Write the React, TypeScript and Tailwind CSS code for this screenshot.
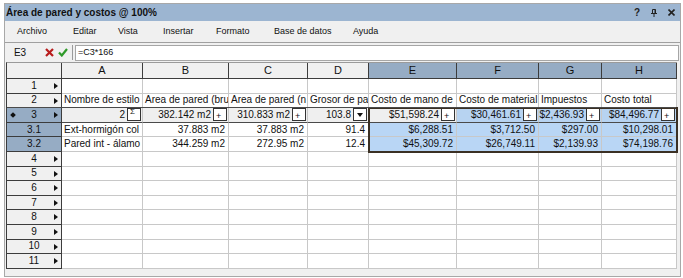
import React from "react";

type Col = { key: string; w: string; sel?: boolean };

const cols: Col[] = [
  { key: "A", w: "w-[81px]" },
  { key: "B", w: "w-[86px]" },
  { key: "C", w: "w-[79px]" },
  { key: "D", w: "w-[61px]" },
  { key: "E", w: "w-[88px]", sel: true },
  { key: "F", w: "w-[82px]", sel: true },
  { key: "G", w: "w-[63px]", sel: true },
  { key: "H", w: "w-[75px]", sel: true },
];

// as shown in the grid (cells clip their text)
const headerTexts = [
  "Nombre de estilo",
  "Area de pared (bru",
  "Area de pared (n",
  "Grosor de pa",
  "Costo de mano de",
  "Costo de material",
  "Impuestos",
  "Costo total",
];

const summary = ["2", "382.142 m2", "310.833 m2", "103.8", "$51,598.24", "$30,461.61", "$2,436.93", "$84,496.77"];
const summaryGlyph = ["sum", "plus", "plus", "down", "plus", "plus", "plus", "plus"];

const subRows = [
  {
    id: "3.1",
    cells: ["Ext-hormigón col", "37.883 m2", "37.883 m2", "91.4", "$6,288.51", "$3,712.50", "$297.00", "$10,298.01"],
  },
  {
    id: "3.2",
    cells: ["Pared int - álamo", "344.259 m2", "272.95 m2", "12.4", "$45,309.72", "$26,749.11", "$2,139.93", "$74,198.76"],
  },
];

const emptyRows = ["4", "5", "6", "7", "8", "9", "10", "11"];

const menu = [
  { label: "Archivo", w: "w-[56px]" },
  { label: "Editar", w: "w-[45px]" },
  { label: "Vista", w: "w-[45px]" },
  { label: "Insertar", w: "w-[53px]" },
  { label: "Formato", w: "w-[58px]" },
  { label: "Base de datos", w: "w-[79px]" },
  { label: "Ayuda", w: "w-[60px]" },
];

function Arrow() {
  return (
    <svg width="4" height="6" viewBox="0 0 4 6" className="absolute right-[3px] top-[4px]">
      <path d="M0 0 L4 3 L0 6 Z" fill="#111" />
    </svg>
  );
}

function RowHeader({ label, sel, arrow, dot }: { label: string; sel?: boolean; arrow?: boolean; dot?: boolean }) {
  return (
    <div
      className={`relative w-[55px] shrink-0 h-full border-r border-b border-[#3c3c3c] flex items-center justify-center ${
        sel ? "bg-[#96acc4]" : "bg-[#f0f0f0]"
      }`}
    >
      {dot && <div className="absolute left-[4px] top-[5px] w-[4px] h-[4px] bg-[#111] rotate-45" />}
      <span className="leading-none">{label}</span>
      {arrow && <Arrow />}
    </div>
  );
}

function CellBox({ kind }: { kind: string }) {
  return (
    <div className="w-[14px] h-[13px] shrink-0 mr-[1px] border border-[#333] bg-white relative">
      {kind === "sum" && <span className="absolute left-[2px] top-[-1px] text-[8px] leading-none">Σ</span>}
      {kind === "plus" && <span className="absolute left-[2px] bottom-[-1px] text-[9px] leading-none">+</span>}
      {kind === "down" && (
        <svg width="6" height="4" viewBox="0 0 6 4" className="absolute left-[3px] top-[4px]">
          <path d="M0 0 L6 0 L3 4 Z" fill="#111" />
        </svg>
      )}
    </div>
  );
}

export default function App() {
  return (
    <div
      className="w-[683px] h-[278px] bg-white overflow-hidden pt-[3px] pl-[4px] text-[#111]"
      style={{ fontFamily: '"Liberation Sans", Arial, sans-serif' }}
    >
      <div className="w-[677px] h-[274px] border border-[#a8a8a8] bg-[#f0f0f0] flex flex-col">
        {/* title bar */}
        <div className="h-[17px] bg-[#9cb5d1] flex items-center shrink-0">
          <span className="pl-[1px] font-bold text-[10px] leading-none text-[#111]">Área de pared y costos @ 100%</span>
          <div className="ml-auto flex items-center gap-[11px] pr-[5px] text-[#222]">
            <span className="font-bold text-[10px] leading-none">?</span>
            <svg width="6" height="8" viewBox="0 0 6 8">
              <path d="M1.5 0.5 H4.5 V4.5 H1.5 Z" fill="none" stroke="#222" strokeWidth="1" />
              <path d="M0 4.5 H6 M3 4.5 V8" stroke="#222" strokeWidth="1" />
              <path d="M4 0.5 V4.5" stroke="#222" strokeWidth="1" />
            </svg>
            <svg width="7" height="7" viewBox="0 0 7 7">
              <path d="M0.5 0.5 L6.5 6.5 M6.5 0.5 L0.5 6.5" stroke="#222" strokeWidth="1.6" />
            </svg>
          </div>
        </div>

        {/* menu */}
        <div className="h-[22px] shrink-0 flex items-center border-b border-[#a0a0a0] text-[9px]">
          {menu.map((m) => (
            <div key={m.label} className={`${m.w} pl-[12px] leading-none`}>
              {m.label}
            </div>
          ))}
        </div>

        {/* formula bar */}
        <div className="h-[19px] shrink-0 flex items-center">
          <div className="w-[30px] text-center text-[10px] leading-none">E3</div>
          <svg width="9" height="9" viewBox="0 0 9 9" className="ml-[10px]">
            <path d="M1 1 L8 8 M8 1 L1 8" stroke="#b81c1c" strokeWidth="2.2" />
          </svg>
          <svg width="10" height="9" viewBox="0 0 10 9" className="ml-[4px]">
            <path d="M1 4.5 L3.8 7.5 L9 1" fill="none" stroke="#2f9a2a" strokeWidth="2.2" />
          </svg>
          <div className="ml-[4px] w-px h-[15px] bg-[#9a9a9a]" />
          <div className="ml-[2px] w-[604px] h-[16px] border border-[#a6a6a6] bg-white flex items-center pl-[2px] text-[9px]">
            =C3*166
          </div>
        </div>

        {/* grid */}
        <div className="relative ml-px w-[671px] border-t border-[#9a9a9a] border-l border-l-[#3c3c3c] bg-white text-[10px]">
          {/* column headers */}
          <div className="flex h-[16px]">
            <div className="w-[55px] shrink-0 border-r border-b border-[#3c3c3c] bg-[#f0f0f0]" />
            {cols.map((c) => (
              <div
                key={c.key}
                className={`${c.w} shrink-0 border-r border-b border-[#3c3c3c] flex items-center justify-center text-[11px] leading-none ${
                  c.sel ? "bg-[#96acc4]" : "bg-[#f0f0f0]"
                }`}
              >
                {c.key}
              </div>
            ))}
          </div>

          {/* row 1 */}
          <div className="flex h-[14.6px]">
            <RowHeader label="1" arrow />
            {cols.map((c) => (
              <div key={c.key} className={`${c.w} shrink-0 border-r border-b border-[#c8c8c8]`} />
            ))}
          </div>

          {/* row 2 */}
          <div className="flex h-[14.6px]">
            <RowHeader label="2" arrow />
            {cols.map((c, i) => (
              <div
                key={c.key}
                className={`${c.w} shrink-0 border-r border-b border-[#c8c8c8] overflow-hidden whitespace-nowrap pl-[2px] flex items-center leading-none`}
              >
                {headerTexts[i]}
              </div>
            ))}
          </div>

          {/* row 3 summary */}
          <div className="flex h-[14.6px]">
            <RowHeader label="3" sel arrow dot />
            {cols.map((c, i) => (
              <div
                key={c.key}
                className={`${c.w} shrink-0 border-r border-[#c8c8c8] border-b border-b-[#4a4a4a] flex items-center justify-end leading-none ${
                  c.sel && i > 4 ? "bg-[#b7d3f1]" : "bg-[#efefef]"
                }`}
              >
                <span className="pr-[2px] whitespace-nowrap">{summary[i]}</span>
                <CellBox kind={summaryGlyph[i]} />
              </div>
            ))}
          </div>

          {/* rows 3.1 / 3.2 */}
          {subRows.map((r) => (
            <div key={r.id} className="flex h-[14.6px]">
              <RowHeader label={r.id} sel />
              {cols.map((c, i) => (
                <div
                  key={c.key}
                  className={`${c.w} shrink-0 border-r border-b border-[#c8c8c8] overflow-hidden whitespace-nowrap flex items-center leading-none ${
                    i === 0 ? "pl-[2px]" : "justify-end pr-[3px]"
                  } ${c.sel ? "bg-[#b9d6f5]" : ""}`}
                >
                  {r.cells[i]}
                </div>
              ))}
            </div>
          ))}

          {/* empty rows */}
          {emptyRows.map((r) => (
            <div key={r} className="flex h-[14.6px]">
              <RowHeader label={r} arrow />
              {cols.map((c) => (
                <div key={c.key} className={`${c.w} shrink-0 border-r border-b border-[#c8c8c8]`} />
              ))}
            </div>
          ))}

          {/* selection outline */}
          <div className="absolute left-[361px] top-[44px] w-[310px] h-[46px] border-2 border-[#3b3024] pointer-events-none" />
          {/* row 3 top rule */}
          <div className="absolute left-0 top-[44.2px] w-[669px] h-px bg-[#4a4a4a] pointer-events-none" />
        </div>
      </div>
    </div>
  );
}
